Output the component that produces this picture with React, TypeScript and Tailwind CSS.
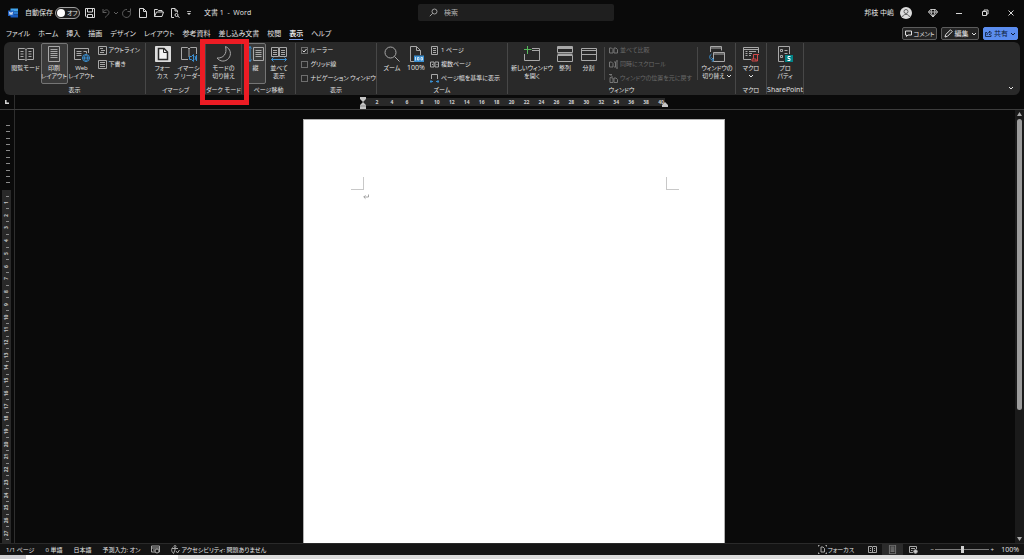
import { type ReactNode } from 'react';
import clsx from 'clsx';

const TABS = [
  'ファイル', 'ホーム', '挿入', '描画', 'デザイン', 'レイアウト',
  '参考資料', '差し込み文書', '校閲', '表示', 'ヘルプ',
];

const GRAY = '#a8a8a8';
const BLUE = '#3b8fd0';

type SvgProps = { children: ReactNode; className?: string; box?: number };

function Svg({ children, className = 'size-4', box = 16 }: SvgProps) {
  return (
    <svg
      viewBox={`0 0 ${box} ${box}`}
      className={clsx('shrink-0', className)}
      fill="none"
      stroke={GRAY}
      strokeWidth="1"
      aria-hidden="true"
    >
      {children}
    </svg>
  );
}

/* ---------- large ribbon icons (16 x 16) ---------- */

const ReadIcon = () => (
  <Svg>
    <path d="M.5 2.5h6L8 3.5l1.5-1h6v11h-6L8 14.5l-1.5-1h-6zM8 3.5v11" />
    <path d="M2.5 5.5h3M2.5 8h3M2.5 10.5h3M10.5 5.5h3M10.5 8h3M10.5 10.5h3" />
  </Svg>
);

const PrintLayoutIcon = ({ className }: { className?: string }) => (
  <Svg className={className}>
    <path d="M2.5.5h11v15h-11z" />
    <path d="M4.5 3.5h7M4.5 5.5h7M4.5 7.5h7M4.5 9.5h7M4.5 11.5h7" />
  </Svg>
);

const WebIcon = () => (
  <Svg>
    <path d="M7 13.5H.5v-11h14V7" />
    <path d="M2.5 5.5h5M2.5 7.5h5M2.5 9.5h5M9.5 5.5h3v2" />
    <g stroke={BLUE}>
      <circle cx="12" cy="12" r="3.5" fill="#292929" />
      <path d="M8.5 12h7M12 8.5c-2 2-2 5 0 7M12 8.5c2 2 2 5 0 7" />
    </g>
  </Svg>
);

const FocusIcon = () => (
  <Svg>
    <path d="M.5.5h15v15H.5z" fill="#dcdcdc" stroke="#dcdcdc" />
    <path d="M3.5 2.5H9L12.5 6v7.5h-9z" fill="#f2f2f2" stroke="#292929" strokeWidth="1.5" />
    <path d="M8.5 3v3.5H12" stroke="#292929" />
  </Svg>
);

const ImmersiveIcon = () => (
  <Svg>
    <path d="M7 13.5H.5v-12h6L8 3l1.5-1.5h6V8M8 3v8" />
    <g stroke={BLUE}>
      <path d="M8.5 10.5h2l2-2v7l-2-2h-2zM14 10q1.2 2 0 4M15.5 9v6" />
    </g>
  </Svg>
);

const MoonIcon = () => (
  <Svg>
    <path d="M9.5.5c5 2 6.500 8 3 12-3 3.500-8.500 3.500-11.500-.5 6 .5 10.500-4 8.500-11.500z" />
  </Svg>
);

const VerticalIcon = () => (
  <Svg>
    <path d="M5.5 1.5h10v13h-10zM7.5 4.5h6M7.5 6.5h6M7.5 8.5h6M7.5 10.5h6" />
    <path d="M2 .5v15M.5 2.5 2 .5l1.5 2M.5 13.5l1.5 2 1.5-2" stroke={BLUE} />
  </Svg>
);

const SideBySideIcon = () => (
  <Svg>
    <path d="M.5 1.5h7v9h-7zM8.5 1.5h7v9h-7zM2 4.5h4M2 6.5h4M2 8.5h4M10 4.5h4M10 6.5h4M10 8.5h4" />
    <path d="M.5 13.5h15M2.5 11.5l-2 2 2 2M13.5 11.5l2 2-2 2" stroke={BLUE} />
  </Svg>
);

const ZoomIcon = () => (
  <Svg>
    <circle cx="6.5" cy="6.5" r="5.5" />
    <path d="m10.5 10.500 5 5" />
  </Svg>
);

const HundredIcon = () => (
  <Svg>
    <path d="M6 15.5H2.5V.5h6l4 4V9M8.5.5v4h4" />
    <path d="M6 9.5h10V16H6z" fill={BLUE} stroke="none" />
    <path d="M7.5 11v3.5M9.500 11.500h1.500v2.500H9.500zM13 11.500h1.500v2.500H13z" stroke="#fff" strokeWidth=".7" />
  </Svg>
);

const NewWindowIcon = () => (
  <Svg>
    <path d="M8 2.5h7.5v12H.5V8M8 4.5h7.5" />
    <path d="M3.5 0v8M0 3.500h7.500" stroke="#57b95c" />
  </Svg>
);

const ArrangeIcon = () => (
  <Svg>
    <path d="M.5.5h15v6H.5zM.5 9.500h15v6H.5z" />
    <path d="M.5 2h15M.5 8.500h15" strokeWidth="2" />
  </Svg>
);

const SplitIcon = () => (
  <Svg>
    <path d="M.5 2.5h15v12H.5zM.5 8.5h15M.5 4.500h15" />
  </Svg>
);

const SwitchIcon = () => (
  <Svg>
    <path d="M1.5 6V.5h11v4M1.500 2h11" />
    <path d="M4.5 6.500h11v9h-11zM5 8h10.500" fill="#292929" />
    <path d="M2.500 8c-3 2-2 6 1.500 6M2.500 11.500 5 14l-2.500 2" stroke={BLUE} />
  </Svg>
);

const MacroIcon = () => (
  <Svg>
    <path d="M8 13.5H.5v-12h15V7M.5 3.5h15M2.5 5.500h2M6 5.500h7M2.5 7.500h2M6 7.500h3M2.5 9.500h2M6 9.500h2" />
    <path d="M10.5 13V8.5H16M14.500 8.500v6.500H9v-2h4v2" stroke="#d04848" />
  </Svg>
);

const PropertyIcon = () => (
  <Svg>
    <path d="M7 15.5H1.500V.5h11V8M3.500 3.500h2v2h-2zM3.500 9.500h2v2h-2zM7.500 4.500h3M7.500 7.500h3" />
    <path d="M8 9h8v7H8z" fill="#038387" stroke="none" />
    <path d="M13.500 10.500H11v2h2v2h-2.500" stroke="#fff" />
  </Svg>
);

/* ---------- small ribbon icons (9 x 9) ---------- */

const small = 'size-[9px]';

const OutlineIcon = () => (
  <Svg box={9} className={small}>
    <path d="M.5.5h8v8h-8zM2 2.500h3M3 4.500h4M2 6.500h4" />
  </Svg>
);

const DraftIcon = () => (
  <Svg box={9} className={small}>
    <path d="M.5.5h8v8h-8zM2 2.500h5M2 4.500h5M2 6.500h5" />
  </Svg>
);

const OnePageIcon = () => (
  <Svg box={9} className={small}>
    <path d="M1.5.5h6v8h-6zM3 2.500h3M3 4.500h3M3 6.500h3" />
  </Svg>
);

const MultiPageIcon = () => (
  <Svg box={9} className={small}>
    <path d="M.5 2h3.500v5H.5zM5 2h3.500v5H5zM2 4.500h1M6.500 4.500h1" />
  </Svg>
);

const PageWidthIcon = () => (
  <Svg box={9} className={small}>
    <path d="M1.500 5V.5h6V5" />
    <path d="M0 7.500h3M6 7.500h3M1.500 6 0 7.500 1.500 9M7.500 6 9 7.500 7.500 9" stroke={BLUE} />
  </Svg>
);

const CompareIcon = () => (
  <Svg box={9} className={small}>
    <path d="M.5 2h2L4 3.500V7H.5zM5 2h2l1.500 1.500V7H5z" />
  </Svg>
);

const SyncScrollIcon = () => (
  <Svg box={9} className={small}>
    <path d="M.5 2h2L4 3.500V7H.5zM5 2h1.500v5H5M8 .5v8M7 1.500l1-1 1 1M7 7.500l1 1 1-1" />
  </Svg>
);

const ResetPosIcon = () => (
  <Svg box={9} className={small}>
    <path d="M1 3.500v5h3V4zM5 4h2l1.500 1.500v3H5zM0 .5h3M.5 0l3 3" />
  </Svg>
);

const Caret = ({ className }: { className?: string }) => (
  <svg
    viewBox="0 0 6 4"
    className={clsx('h-1 w-1.5 shrink-0', className)}
    fill="none"
    stroke="currentColor"
    aria-hidden="true"
  >
    <path d="M1 1l2 2 2-2" />
  </svg>
);

/* ---------- ribbon parts ---------- */

type GroupProps = { label: string; className: string; children: ReactNode; labelClass?: string };

function Group({ label, className, children, labelClass }: GroupProps) {
  return (
    <section
      aria-label={label}
      className={clsx('relative my-px flex shrink-0 flex-col border-r border-[#474747]', className)}
    >
      <div className="flex h-[41px] justify-center">{children}</div>
      <h2 className={clsx('mt-0.5 text-center leading-2 whitespace-nowrap', labelClass)}>{label}</h2>
    </section>
  );
}

type BigProps = { icon: ReactNode; lines: string[]; className: string; active?: boolean; caret?: boolean };

function BigButton({ icon, lines, className, active, caret }: BigProps) {
  return (
    <button
      type="button"
      aria-pressed={active}
      className={clsx(
        'flex shrink-0 flex-col items-center rounded-xs border pt-0.5 leading-2 whitespace-nowrap',
        active ? 'border-[#757575] bg-[#3a3a3a]' : 'border-transparent',
        className,
      )}
    >
      {icon}
      <span className="mt-0.5 flex flex-col items-center">
        {lines.map((line, i) => (
          <span key={line} className="flex items-center gap-px">
            {line}
            {caret && i === lines.length - 1 && lines.length > 1 && <Caret />}
          </span>
        ))}
        {caret && lines.length === 1 && <Caret className="mt-0.5" />}
      </span>
    </button>
  );
}

function SmallButton({ icon, label, disabled }: { icon: ReactNode; label: string; disabled?: boolean }) {
  return (
    <button
      type="button"
      disabled={disabled}
      className="flex h-3.5 items-center gap-0.5 whitespace-nowrap disabled:text-[#6a6a6a] disabled:[&_svg]:opacity-60"
    >
      {icon}
      {label}
    </button>
  );
}

function CheckRow({ label, checked }: { label: string; checked?: boolean }) {
  return (
    <label className="flex h-3.5 items-center gap-[3px] whitespace-nowrap">
      <span className="grid size-[7px] place-items-center">
        <input
          type="checkbox"
          defaultChecked={checked}
          className="peer col-start-1 row-start-1 size-[7px] appearance-none border border-[#6e6e6e]"
        />
        <svg
          viewBox="0 0 7 7"
          className="invisible col-start-1 row-start-1 size-[7px] peer-checked:visible"
          fill="none"
          stroke="#e0e0e0"
          aria-hidden="true"
        >
          <path d="M1.500 3.500 3 5l2.500-3" />
        </svg>
      </span>
      {label}
    </label>
  );
}

function Ribbon() {
  return (
    <div className="mx-1 flex h-[53px] shrink-0 rounded-md bg-[#292929] text-[6px]">
      <Group label="表示" className="w-[142px]">
        <BigButton icon={<ReadIcon />} lines={['閲覧モード']} className="w-[30px]" />
        <BigButton icon={<PrintLayoutIcon />} lines={['印刷', 'レイアウト']} className="w-[27px]" active />
        <BigButton icon={<WebIcon />} lines={['Web', 'レイアウト']} className="w-[28px]" />
        <div className="ml-0.5 w-[41px]">
          <SmallButton icon={<OutlineIcon />} label="アウトライン" />
          <SmallButton icon={<DraftIcon />} label="下書き" />
        </div>
      </Group>
      <Group label="イマーシブ" className="w-[60px]">
        <BigButton icon={<FocusIcon />} lines={['フォー', 'カス']} className="w-[26px]" />
        <BigButton icon={<ImmersiveIcon />} lines={['イマーシ', 'ブ リーダー']} className="w-[26px]" />
      </Group>
      <Group label="ダーク モード" className="w-[36px]">
        <BigButton icon={<MoonIcon />} lines={['モードの', '切り替え']} className="w-[30px]" />
        <div className="pointer-events-none absolute -top-1 -right-2 -bottom-[11px] -left-1.5 z-10 border-5 border-[#ec1c24]" />
      </Group>
      <Group label="ページ移動" className="w-[54px]">
        <BigButton icon={<VerticalIcon />} lines={['縦']} className="w-[21px]" active />
        <BigButton icon={<SideBySideIcon />} lines={['並べて', '表示']} className="w-[26px]" />
      </Group>
      <Group label="表示" className="w-[81px]">
        <div className="w-[71px]">
          <CheckRow label="ルーラー" checked />
          <CheckRow label="グリッド線" />
          <CheckRow label="ナビゲーション ウィンドウ" />
        </div>
      </Group>
      <Group label="ズーム" className="w-[131px]">
        <BigButton icon={<ZoomIcon />} lines={['ズーム']} className="w-[24px]" />
        <BigButton icon={<HundredIcon />} lines={['100%']} className="w-[24px] text-[7px]" />
        <div className="ml-0.5 w-[74px]">
          <SmallButton icon={<OnePageIcon />} label="1 ページ" />
          <SmallButton icon={<MultiPageIcon />} label="複数ページ" />
          <SmallButton icon={<PageWidthIcon />} label="ページ幅を基準に表示" />
        </div>
      </Group>
      <Group label="ウィンドウ" className="w-[228px]">
        <BigButton icon={<NewWindowIcon />} lines={['新しいウィンドウ', 'を開く']} className="w-[42px]" />
        <BigButton icon={<ArrangeIcon />} lines={['整列']} className="w-[24px]" />
        <BigButton icon={<SplitIcon />} lines={['分割']} className="w-[23px]" />
        <div className="mx-1 my-1 w-[94px] border-x border-[#474747] pl-1">
          <div className="-mt-1">
            <SmallButton disabled icon={<CompareIcon />} label="並べて比較" />
            <SmallButton disabled icon={<SyncScrollIcon />} label="同時にスクロール" />
            <SmallButton disabled icon={<ResetPosIcon />} label="ウィンドウの位置を元に戻す" />
          </div>
        </div>
        <BigButton icon={<SwitchIcon />} lines={['ウィンドウの', '切り替え']} className="w-[30px]" caret />
      </Group>
      <Group label="マクロ" className="w-[31px]">
        <BigButton icon={<MacroIcon />} lines={['マクロ']} className="w-[26px]" caret />
      </Group>
      <Group label="SharePoint" className="w-[37px]" labelClass="text-[7px]">
        <BigButton icon={<PropertyIcon />} lines={['プロ', 'パティ']} className="w-[26px]" />
      </Group>
      <button type="button" aria-label="リボンの表示オプション" className="mt-auto mr-1 mb-[3px] ml-auto p-0.5">
        <Caret />
      </button>
    </div>
  );
}

/* ---------- title bar and tabs ---------- */

function IconButton({ label, children, dim }: { label: string; children: ReactNode; dim?: boolean }) {
  return (
    <button type="button" aria-label={label} className={clsx('flex items-center', dim && 'opacity-40')}>
      <svg viewBox="0 0 10 10" className="size-2.5" fill="none" stroke="#d6d6d6" aria-hidden="true">
        {children}
      </svg>
    </button>
  );
}

function TitleBar() {
  return (
    <header className="grid h-[25px] shrink-0 grid-cols-[1fr_196px_1fr] items-center pl-2">
      <div className="flex items-center">
        <svg viewBox="0 0 10 10" className="size-2.5" aria-label="Word">
          <path d="M2.500.5H10v3H2.500z" fill="#41a5ee" />
          <path d="M2.500 3.500H10v3H2.500z" fill="#2b7cd3" />
          <path d="M2.500 6.500H10v3H2.500z" fill="#185abd" />
          <path d="M0 2.500h6V8H0z" fill="#1d5fc0" />
          <path d="m1.300 3.800.8 2.900.9-2.500.9 2.500.8-2.900" fill="none" stroke="#fff" strokeWidth=".7" />
        </svg>
        <label className="ml-[7px] flex items-center gap-0.5">
          自動保存
          <span className="grid items-center">
            <input
              type="checkbox"
              role="switch"
              className="col-start-1 row-start-1 h-3 w-[25px] appearance-none rounded-full border border-[#a0a0a0] bg-[#1c1c1c]"
            />
            <span className="pointer-events-none col-start-1 row-start-1 flex items-center gap-0.5 pl-0.5 text-[6px]">
              <span className="size-2 rounded-full bg-white" />
              オフ
            </span>
          </span>
        </label>
        <div className="ml-[5px] flex items-center gap-1.5">
          <IconButton label="上書き保存">
            <path d="M.5.5h9v9H2l-1.500-1.500zM2.500.5v3.500h5V.5M2.500 9.500V6.500h5v3" />
          </IconButton>
          <div className="flex w-[15px] items-center gap-0.5">
            <IconButton label="元に戻す" dim>
              <path d="M2 1v3.500h3.500M2 4.500c2-4 6-3 6 0 0 2-2 3-4 5" />
            </IconButton>
            <Caret className="opacity-40" />
          </div>
          <IconButton label="やり直し" dim>
            <path d="M8.500.5v3h-3M8 3.500A4 4 0 1 1 5 1.500" />
          </IconButton>
          <IconButton label="新規作成">
            <path d="M1.500.5h4l3 3v6h-7zM5.500.5v3h3" />
          </IconButton>
          <IconButton label="開く">
            <path d="M.5 8.500v-7h3l1 1h3.500V4M.5 8.500 2.500 4h7L8 8.500z" />
          </IconButton>
          <IconButton label="印刷プレビュー">
            <path d="M4 9.500H1.500v-9h3.500l2.500 2.500v1.500M5 .5V3h2.500" />
            <circle cx="6.500" cy="7" r="1.500" />
            <path d="m7.500 8 2 1.500" />
          </IconButton>
          <button type="button" aria-label="クイック アクセス ツール バー">
            <svg viewBox="0 0 6 6" className="size-1.5" fill="#d6d6d6" aria-hidden="true">
              <path d="M1 1h4v.8H1zM1 3h4L3 5z" />
            </svg>
          </button>
        </div>
        <h1 className="ml-3 whitespace-pre">文書 1  -  Word</h1>
      </div>
      <label className="flex h-[17px] items-center gap-1.5 rounded-xs bg-[#1f1f1f] px-[11px]">
        <svg viewBox="0 0 9 9" className="size-[9px] shrink-0" fill="none" stroke="#a0a0a0" aria-label="検索">
          <circle cx="5.500" cy="3.500" r="2.500" />
          <path d="M3.700 5.300.8 8.200" />
        </svg>
        <input type="search" placeholder="検索" className="w-full min-w-0 outline-none placeholder:text-[#b4b4b4]" />
      </label>
      <div className="flex items-center justify-end gap-4 pr-2">
        <button type="button" className="flex items-center gap-1.5">
          邦枝 中嶋
          <svg viewBox="0 0 12 12" className="size-3" fill="none" stroke="#606060" aria-hidden="true">
            <circle cx="6" cy="6" r="6" fill="#dcdcdc" stroke="none" />
            <circle cx="6" cy="4.500" r="2" />
            <path d="M2.500 10c.5-3.500 6.500-3.500 7 0" />
          </svg>
        </button>
        <IconButton label="Premium">
          <path d="M2.500 1.500h5l2 2.500L5 9 .5 4zM.5 4h9M3.500 1.500 3 4l2 5 2-5-.5-2.500" strokeWidth=".9" />
        </IconButton>
        <IconButton label="最小化">
          <path d="M2 5.500h6" />
        </IconButton>
        <IconButton label="元に戻す (縮小)">
          <path d="M2.500 3.500h4v4h-4zM4 3V2h4v4H7" />
        </IconButton>
        <IconButton label="閉じる">
          <path d="m2.500 2.500 5 5M7.500 2.500l-5 5" />
        </IconButton>
      </div>
    </header>
  );
}

function TabRow() {
  const action = 'flex h-[13px] items-center justify-center gap-0.5 rounded-xs border';
  return (
    <div className="flex h-[17px] shrink-0 items-center justify-between px-1.5">
      <nav className="flex gap-2 pt-0.5 whitespace-nowrap">
        {TABS.map((tab) => (
          <a
            key={tab}
            href="#"
            aria-current={tab === '表示' ? 'page' : undefined}
            className={clsx('border-b leading-2.5', tab === '表示' ? 'border-[#7c9ee8] font-bold' : 'border-transparent')}
          >
            {tab}
          </a>
        ))}
      </nav>
      <div className="flex gap-1 whitespace-nowrap">
        <button type="button" className={clsx(action, 'w-[35px] border-[#5c5c5c] bg-[#232323] text-[6px]')}>
          <svg viewBox="0 0 7 7" className="size-[7px]" fill="none" stroke="#e0e0e0" aria-hidden="true">
            <path d="M.5 1h6v4H3L1.500 6.500V5h-1z" />
          </svg>
          コメント
        </button>
        <button type="button" className={clsx(action, 'w-[38px] border-[#5c5c5c] bg-[#232323]')}>
          <svg viewBox="0 0 9 9" className="size-[9px]" fill="none" stroke="#e0e0e0" aria-hidden="true">
            <path d="M1 8 1.700 5.500 6.500.8 8.200 2.500 3.500 7.300z" />
          </svg>
          編集
          <Caret />
        </button>
        <button type="button" className={clsx(action, 'w-[35px] border-[#5b8def] bg-[#5b8def] text-[#0c1a33]')}>
          <svg viewBox="0 0 7 7" className="size-[7px]" fill="none" stroke="#0c1a33" strokeWidth=".8" aria-hidden="true">
            <path d="M2 2.500H.5v4H6V5M2 5c0-2 1-2.500 2.500-2.500V1l2 2-2 2V3.800" />
          </svg>
          共有
          <Caret />
        </button>
      </div>
    </div>
  );
}

/* ---------- rulers and the document ---------- */

const RULER_MARKS = Array.from({ length: 20 }, (_, i) => (i + 1) * 2);
const LINE_MARKS = Array.from({ length: 55 }, (_, i) => i);

function HorizontalRuler() {
  return (
    <div className="flex h-[15px] shrink-0 border-b border-[#3c3c3c]">
      <div className="flex w-[15px] items-center justify-center border-r border-[#2e2e2e]">
        <svg viewBox="0 0 4 4" className="size-1" fill="none" stroke="#d8d8d8" strokeWidth="1.500" aria-hidden="true">
          <path d="M.8 0v3.200H4" />
        </svg>
      </div>
      <div className="flex flex-1 justify-center pr-3">
        <div className="relative mt-[3px] h-2 w-[302px] bg-[#292929]">
          <div className="-mr-1 flex pl-[7px] text-[5px] leading-2 font-bold text-[#d0d0d0]">
            {RULER_MARKS.map((n) => (
              <span key={n} className="w-0 flex-1 text-center">{n}</span>
            ))}
          </div>
          <svg viewBox="0 0 8 12" className="absolute -top-px -left-1 h-3 w-2" fill="#c4c4c4" aria-hidden="true">
            <path d="M1 0h6v2L4 5 1 2zM4 5l3 3v4H1V8z" />
            <path d="M1 9h6" stroke="#666" strokeWidth=".6" />
          </svg>
          <svg viewBox="0 0 8 5" className="absolute top-1 -right-1 h-[5px] w-2" fill="#c4c4c4" aria-hidden="true">
            <path d="m4 0 3 3v2H1V3z" />
          </svg>
        </div>
      </div>
    </div>
  );
}

function VerticalRuler() {
  return (
    <div className="flex w-[15px] shrink-0 flex-col border-r border-[#2e2e2e] pl-0.5">
      <div className="mt-3 mb-1 flex h-16 w-[9px] flex-col">
        {LINE_MARKS.slice(0, 10).map((i) => (
          <span key={i} className="flex flex-1 items-center justify-end pr-px">
            <span className="h-px w-1 bg-[#8a8a8a]" />
          </span>
        ))}
      </div>
      <div className="flex min-h-0 w-[9px] flex-1 flex-col overflow-hidden bg-[#292929] pt-[3px]">
        {LINE_MARKS.map((i) => (
          <span key={i} className="flex min-h-0 flex-1 items-center justify-center">
            {i % 2 === 0 ? (
              <span className="ml-0.5 h-px w-[3px] bg-[#8a8a8a]" />
            ) : (
              <span className="-rotate-90 text-[5px] leading-none font-bold text-[#c4c4c4]">{(i + 1) / 2}</span>
            )}
          </span>
        ))}
      </div>
    </div>
  );
}

function Workspace() {
  return (
    <main className="flex min-h-0 flex-1">
      <VerticalRuler />
      <div className="flex flex-1 justify-center overflow-hidden pt-[9px] pr-0.5">
        <article className="w-[422px] border border-b-0 border-[#b0b0b0] bg-white pt-[57px] pr-[45px] pl-[47px]">
          <div className="flex justify-between">
            <span className="h-[13px] w-[13px] border-r border-b border-[#c8c8c8]" />
            <span className="h-[13px] w-[13px] border-b border-l border-[#c8c8c8]" />
          </div>
          <p className="ml-3 text-[#909090]">
            <svg
              viewBox="0 0 6 6"
              className="mt-1 size-1.5"
              fill="none"
              stroke="currentColor"
              strokeWidth=".8"
              aria-label="段落記号"
            >
              <path d="M5.500.5V3H.8M2.500 1.300.8 3l1.700 1.700" />
            </svg>
          </p>
        </article>
      </div>
      <div className="flex w-[9px] shrink-0 flex-col items-center bg-[#1a1a1a] py-0.5">
        <svg viewBox="0 0 5 4" className="h-1 w-[5px]" fill="#a8a8a8" aria-hidden="true">
          <path d="M0 4h5L2.500 0z" />
        </svg>
        <div className="my-[3px] flex w-[5px] flex-1 flex-col">
          <div className="h-[70%] rounded-full bg-[#9c9c9c]" />
        </div>
        <svg viewBox="0 0 5 4" className="h-1 w-[5px]" fill="#a8a8a8" aria-hidden="true">
          <path d="M0 0h5L2.500 4z" />
        </svg>
      </div>
    </main>
  );
}

function StatusBar() {
  return (
    <footer className="flex h-3 shrink-0 items-center justify-between border-t border-[#2a2a2a] bg-[#141414] pr-[5px] pl-1.5 text-[6px] leading-2.5 whitespace-nowrap">
      <div className="flex items-center gap-[11px]">
        <button type="button">1/1 ページ</button>
        <button type="button">0 単語</button>
        <button type="button">日本語</button>
        <button type="button">予測入力: オン</button>
        <button type="button" aria-label="マクロの記録">
          <Svg box={9} className="size-[9px]">
            <path d="M.5 1h8v6h-8zM.5 3h8M2 5h2" />
            <circle cx="6" cy="6" r="2" fill="#141414" />
          </Svg>
        </button>
        <button type="button" className="flex items-center gap-px">
          <Svg box={9} className="size-[9px]">
            <circle cx="4" cy="1.500" r="1" />
            <path d="M1 3.500h6M4 3.500V5L2.500 8.500M1.500 2.500c-2 3 0 5 1 6M5 6l1.500 2 2-3" />
          </Svg>
          アクセシビリティ: 問題ありません
        </button>
      </div>
      <div className="flex items-center">
        <button type="button" className="mr-2 flex items-center gap-px">
          <Svg box={9} className="size-[9px]">
            <path d="M0 2V.5h1.500M7.500.5H9V2M0 7v1.500h1.500M7.500 8.500H9V7M3 2h2l1.500 1.500V7H3z" />
          </Svg>
          フォーカス
        </button>
        <button type="button" aria-label="閲覧モード" className="flex w-[20px] justify-center">
          <Svg box={9} className="size-[9px]">
            <path d="M.5 1.500H4l.5.5.5-.5h3.500v6H5l-.5.500-.5-.5H.5zM4.500 2v6M2 3.500h1M2 5.500h1M6 3.500h1M6 5.500h1" />
          </Svg>
        </button>
        <button type="button" aria-label="印刷レイアウト" className="flex h-[11px] w-[21px] items-center justify-center bg-[#2b2b2b]">
          <PrintLayoutIcon className="size-[9px]" />
        </button>
        <button type="button" aria-label="Web レイアウト" className="mr-1.5 flex w-[20px] justify-center">
          <Svg box={9} className="size-[9px]">
            <path d="M4 7.500H.5v-6h7V4M2 3.500h4M2 5.500h1.500" />
            <circle cx="6.500" cy="6.500" r="1.800" fill="#c8c8c8" />
          </Svg>
        </button>
        <button type="button" aria-label="縮小" className="w-1.5">−</button>
        <input
          type="range"
          aria-label="ズーム"
          className="h-2 w-[54px] appearance-none bg-transparent [&::-webkit-slider-runnable-track]:h-px [&::-webkit-slider-runnable-track]:bg-[#7c7c7c] [&::-webkit-slider-thumb]:-mt-[3px] [&::-webkit-slider-thumb]:h-[7px] [&::-webkit-slider-thumb]:w-[3px] [&::-webkit-slider-thumb]:appearance-none [&::-webkit-slider-thumb]:bg-[#d0d0d0]"
        />
        <button type="button" aria-label="拡大" className="w-1.5">+</button>
        <button type="button" className="ml-1.5 text-[7px]">100%</button>
      </div>
    </footer>
  );
}

export default function App() {
  return (
    <div className="flex h-screen flex-col overflow-hidden bg-[#0a0a0a] font-['Open_Sans','Noto_Sans_CJK_JP',sans-serif] text-[7px] leading-2 text-[#e4e4e4] [font-feature-settings:'palt']">
      <TitleBar />
      <TabRow />
      <Ribbon />
      <HorizontalRuler />
      <Workspace />
      <StatusBar />
      {/* edge of the taskbar below the window */}
      <div className="flex h-1 shrink-0 bg-[#dcdcdc]">
        <div className="w-[26px] bg-[#cfcfd3]" />
        <div className="w-[152px] bg-white" />
      </div>
    </div>
  );
}
